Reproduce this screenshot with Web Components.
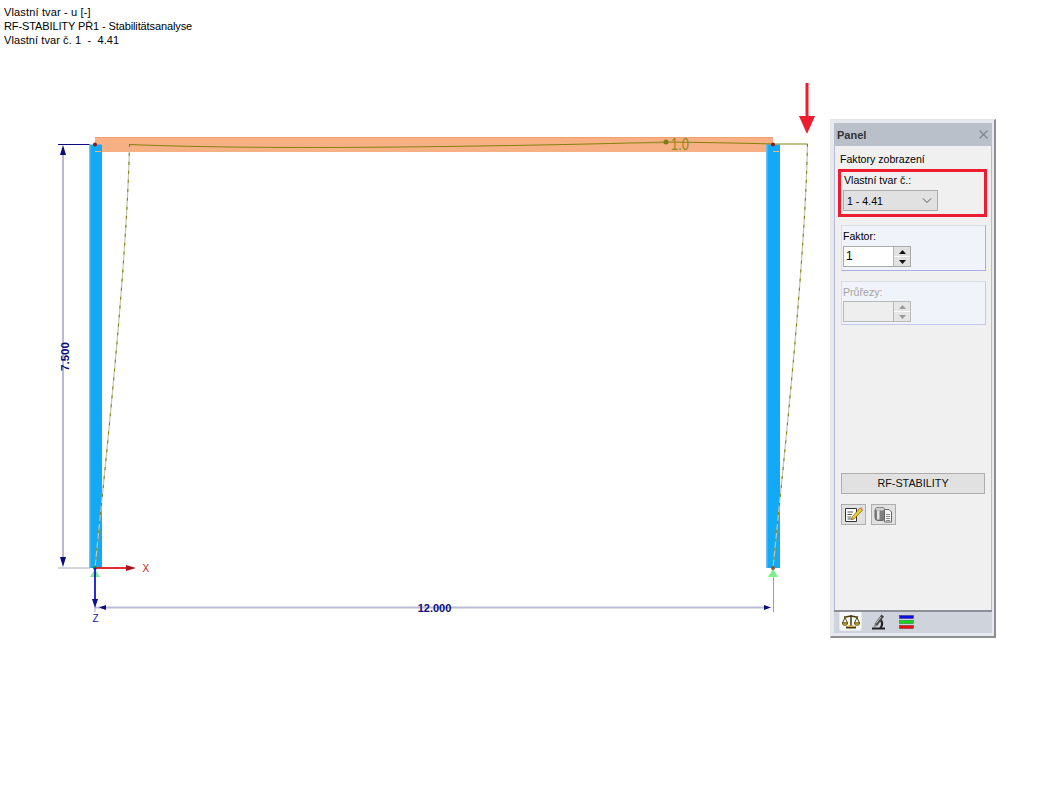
<!DOCTYPE html>
<html lang="cs">
<head>
<meta charset="utf-8">
<title>Panel</title>
<style>
    html, body { margin: 0; background: #fff; font-family: "Liberation Sans", Arial, sans-serif; }
</style>
</head>
<body>
<template id="template-group">
    <style>
        :host { display: block; box-sizing: border-box; margin: 0 5px 0 6px; padding: 2px 1px 0 1px; height: 46px;
            background: #f0f3f9; border: 1px solid #d9dde6; border-right-color: #a9aee6; border-bottom-color: #a9aee6; }
        :host([disabled]) { border-color: #d9dde6; border-right-color: #c4c8ee; border-bottom-color: #c4c8ee; color: #a3a3a3; height: 44px; }
        .label { display: block; height: 18px; line-height: 17px; font-size: 10.6px; }
        :host([disabled]) .label { height: 17px; }
    </style>
    <span class="label"><slot name="label"></slot></span>
    <slot></slot>
</template>
<template id="template-spinner">
    <style>
        :host { display: flex; box-sizing: border-box; width: 68px; height: 21px; border: 1px solid #a9a9a9; background: #fff; font-size: 12px; line-height: 19px; }
        :host([disabled]) { background: #eeeeee; border-color: #b9b9b9; }
        .value { flex: 1; padding-left: 2px; color: #000; }
        .arrows { width: 16px; display: grid; grid-template-rows: 1fr 1fr; gap: 1px; background: #fff; border-left: 1px solid #b5b5b5; }
        .arrows div { background: #e1e1e1; display: flex; align-items: center; justify-content: center; }
        :host([disabled]) .arrows div { background: #e6e6e6; }
        svg { display: block; fill: #111; }
        :host([disabled]) svg { fill: #9a9a9a; }
    </style>
    <div class="value"><slot></slot></div>
    <div class="arrows">
        <div><svg width="7" height="4" viewBox="0 0 7 4"><path d="M3.5 0L7 4H0Z"/></svg></div>
        <div><svg width="7" height="4" viewBox="0 0 7 4"><path d="M0 0H7L3.5 4Z"/></svg></div>
    </div>
</template>
<template id="template-select">
    <style>
        :host { display: flex; align-items: center; justify-content: space-between; box-sizing: border-box; width: 95px; height: 21px;
            padding: 0 3px 0 3px; background: #e1e1e1; border: 1px solid #adadad; font-size: 10.6px; color: #000; }
        svg { display: block; fill: none; stroke: #555; stroke-width: 1; margin-right: 2px; }
    </style>
    <slot></slot>
    <svg width="10" height="6" viewBox="0 0 10 6"><path d="M1 .5L5 4.5L9 .5"/></svg>
</template>
<template id="template-panel">
    <style>
        :host { display: flex; flex-direction: column; box-sizing: border-box; width: 166px; height: 519px; padding: 3px 2px 3px 3px;
            background: #e6eaf0; border: 1px solid #e4e6ea; border-right: 2px solid #8f8f8f; border-bottom: 2px solid #8f8f8f; color: #000; font-size: 10.6px; }
        .title { flex: none; display: flex; align-items: center; justify-content: space-between; height: 23px; padding: 0 4px 0 3px;
            background: #b9c0ca; font-weight: bold; color: #333; font-size: 11px; }
        .title svg { display: block; stroke: #7d838c; stroke-width: 1.2; fill: none; }
        .body { flex: 1; display: flex; flex-direction: column; background: #f0f0f0; border-left: 1px solid #b4bad8; border-right: 1px solid #b4bad8; }
        .tabs { flex: none; display: flex; height: 21px; padding-left: 5px; background: #cfd4dc; border-top: 2px solid #8c8f96; }
    </style>
    <div class="title"><span><slot name="title"></slot></span>
        <svg width="9" height="9" viewBox="0 0 9 9"><path d="M.5 .5L8.5 8.5M8.5 .5L.5 8.5"/></svg></div>
    <div class="body"><slot></slot></div>
    <div class="tabs"><slot name="tabs"></slot></div>
</template>
<template id="template-tool">
    <style>
        :host { display: flex; align-items: center; justify-content: center; box-sizing: border-box; width: 25px; height: 21px;
            background: #e1e1e1; border: 1px solid #adadad; }
    </style>
    <slot></slot>
</template>
<template id="template-tab">
    <style>
        :host { display: flex; align-items: center; justify-content: center; box-sizing: border-box; width: 23px; height: 19px; margin-right: 5px; }
        :host([active]) { background: #f5f7f9; border: 1px solid #e3eaf0; border-top: none; border-radius: 0 0 3px 3px; }
    </style>
    <slot></slot>
</template>
<template id="template-caption">
    <style>
        :host { display: block; padding: 5px 0 0 4px; font-size: 11px; line-height: 14px; color: #000; }
        ::slotted(div) { white-space: pre; }
    </style>
    <slot></slot>
</template>
<template id="template-diagram">
    <style>
        :host { display: block; position: absolute; left: 0; top: 0; width: 1050px; height: 788px; }
        svg { display: block; }
        text { font-family: "Liberation Sans", Arial, sans-serif; }
    </style>
    <svg width="1050" height="788" viewBox="0 0 1050 788">
        <!-- rozmerove cary -->
        <path d="M63 150V563" stroke="#b9b9d2" stroke-width="2" fill="none"/>
        <path d="M95 607.5H768" stroke="#bcbcd4" stroke-width="2" fill="none"/>
        <path d="M58 144.5H90" stroke="#0b0b7a" fill="none"/>
        <path d="M58 568H90" stroke="#a9a9c4" fill="none"/>
        <path d="M773.5 570V612" stroke="#9a9abb" fill="none"/>
        <path d="M95 597V612" stroke="#a9a9c4" fill="none"/>
        <path d="M63 145L66 155H60Z M63 567L66 557H60Z" fill="#0b0b7a"/>
        <path d="M99 607.5L106 605V610Z M771 607.5L764 605V610Z" fill="#0b0b7a"/>

        <!-- ramova konstrukce -->
        <rect x="95" y="137" width="678" height="15" fill="#f7b084"/>
        <path d="M95 137.5H773" stroke="#f1a06d" fill="none"/>
        <rect x="89" y="144.5" width="13" height="423.5" fill="#12a9f7"/>
        <rect x="89" y="144.5" width="1.5" height="423.5" fill="#6fbff0"/>
        <rect x="766" y="144.5" width="14" height="423.5" fill="#12a9f7"/>
        <rect x="766" y="144.5" width="1.5" height="423.5" fill="#6fbff0"/>
        <path d="M95 151.500H101 M773 151.500H779" stroke="#f0b48e" fill="none"/>

        <!-- vlastni tvar -->
        <path d="M129.500 144C127 260 108 440 95 568" stroke="#c4c6aa" stroke-width="1.200" fill="none"/>
        <path d="M807.500 144C805 260 786 440 773 568" stroke="#c4c6aa" stroke-width="1.200" fill="none"/>
        <path d="M129.500 144C127 260 108 440 95 568" stroke="#7f7f00" stroke-dasharray="3 6" fill="none"/>
        <path d="M807.500 144C805 260 786 440 773 568" stroke="#7f7f00" stroke-dasharray="3 6" fill="none"/>
        <path d="M129.500 144.500C200 147.500 300 148 400 147S600 144 666 142C700 142.500 740 143 773 144H807.500" stroke="#82820a" fill="none"/>
        <path d="M632 143H664" stroke="#b09a50" stroke-dasharray="2 1" fill="none"/>
        <circle cx="666" cy="142" r="2.500" fill="#85781a"/>
        <text x="671" y="149.500" font-size="16" fill="#8a8a20" textLength="18" lengthAdjust="spacingAndGlyphs">1.0</text>

        <!-- podpory a uzly -->
        <path d="M95 569L100 577H90Z M773 569L778 577H768Z" fill="#7bf08a"/>
        <circle cx="95" cy="144.500" r="2" fill="#8e1a1a"/>
        <circle cx="773" cy="144.500" r="2" fill="#8e1a1a"/>
        <circle cx="95" cy="568" r="2" fill="#1d8a3a"/>
        <circle cx="773" cy="568" r="2" fill="#8a5a2a"/>

        <!-- osy -->
        <path d="M95 568H127" stroke="#e4141c" stroke-width="1.800" fill="none"/>
        <path d="M126 565L136 568L126 571Z" fill="#a5141c"/>
        <path d="M95 568V600" stroke="#1616d8" stroke-width="1.800" fill="none"/>
        <path d="M92 599L95 608L98 599Z" fill="#10108a"/>

        <text x="142.500" y="572" font-size="10" fill="#c81414">X</text>
        <text x="92.500" y="622" font-size="10" fill="#1414b8">Z</text>

        <text x="434.500" y="611.500" font-size="11" font-weight="bold" fill="#0b0b7a" text-anchor="middle">12.000</text>
        <text transform="translate(68.500 356.500) rotate(-90)" font-size="11.500" font-weight="bold" fill="#0b0b7a" text-anchor="middle">7.500</text>

        <!-- sipka -->
        <path d="M807 83V117" stroke="#ee1c2e" stroke-width="3" fill="none"/>
        <path d="M799 116H815L807 134Z" fill="#ee1c2e"/>
    </svg>
</template>
<template id="template-screen">
    <style>
        :host { display: block; position: relative; width: 1050px; height: 788px; overflow: hidden; }
        .float { position: absolute; left: 830px; top: 119px; }
        .hint { position: absolute; left: 838px; top: 169px; box-sizing: border-box; width: 149px; height: 48px; border: 3px solid #ee1c2e; }
    </style>
    <x-diagram></x-diagram>
    <slot name="caption"></slot>
    <div class="float"><slot></slot></div>
    <div class="hint"></div>
</template>

<x-screen>
    <x-caption slot="caption">
        <div style="letter-spacing:.15px">Vlastní tvar - u [-]</div>
        <div style="letter-spacing:-.11px">RF-STABILITY PŘ1 - Stabilitätsanalyse</div>
        <div style="letter-spacing:.08px">Vlastní tvar č. 1  -  4.41</div>
    </x-caption>
    <x-panel>
        <span slot="title">Panel</span>
        <div style="display:flex;flex-direction:column;flex:1">
            <div style="height:6px"></div>
            <div style="height:14px;line-height:14px;margin-left:5px">Faktory zobrazení</div>
            <div style="height:6px"></div>
            <div style="height:16px;line-height:16px;margin-left:9px">Vlastní tvar č.:</div>
            <div style="height:2px"></div>
            <x-select style="margin-left:8px">1 - 4.41</x-select>
            <div style="height:14px"></div>
            <x-group>
                <span slot="label">Faktor:</span>
                <x-spinner>1</x-spinner>
            </x-group>
            <div style="height:10px"></div>
            <x-group disabled>
                <span slot="label">Průřezy:</span>
                <x-spinner disabled></x-spinner>
            </x-group>
            <div style="flex:1"></div>
            <div style="margin:0 6px 10px 6px;height:21px;box-sizing:border-box;background:#e1e1e1;border:1px solid #adadad;text-align:center;line-height:19px;color:#111;font-size:10.8px">RF-STABILITY</div>
            <div style="display:flex;gap:5px;margin:0 0 85px 6px">
                <x-tool>
                    <svg width="19" height="17" viewBox="0 0 19 17">
                        <path d="M1.500 2.500H12.500V15.500H1.500Z" fill="#fff" stroke="#333"/>
                        <path d="M3.500 6H9M3.500 8.500H8M3.500 11H7M3.500 13H9" stroke="#555" fill="none"/>
                        <path d="M8 11L16 2L18.500 4L10 13L7.500 13.500Z" fill="#f2cf2a" stroke="#6d5a0a" stroke-width=".7"/>
                        <path d="M16 2L17 1L19 3L18.500 4Z" fill="#e88aa0"/>
                    </svg>
                </x-tool>
                <x-tool>
                    <svg width="19" height="17" viewBox="0 0 19 17">
                        <rect x="1" y="1.500" width="10" height="13" rx="3" fill="#7f7f7f" stroke="#666"/>
                        <ellipse cx="6" cy="3" rx="4.500" ry="1.500" fill="#cfcfcf"/>
                        <rect x="3" y="4.500" width="2.500" height="9" fill="#e5e5e5"/>
                        <path d="M10.500 3.500H15L17.500 6V16H10.500Z" fill="#f5f5f5" stroke="#666"/>
                        <path d="M12 8.500H16M12 10.500H16M12 12.500H16M12 14.500H16" stroke="#888" fill="none"/>
                    </svg>
                </x-tool>
            </div>
        </div>
        <x-tab slot="tabs" active>
            <svg width="18" height="15" viewBox="0 0 18 15">
                <path d="M9 1V12.500M2 3C5 3 7 2 9 2S13 3 16 3" stroke="#4a3c08" stroke-width="1.500" fill="none"/>
                <path d="M3 3.500L.5 9H5.500ZM15 3.500L12.500 9H17.500Z" fill="none" stroke="#5c4a0c" stroke-width="1"/>
                <path d="M.3 9A2.700 2.400 0 0 0 5.700 9ZM12.300 9A2.700 2.400 0 0 0 17.700 9Z" fill="#d8b53a" stroke="#4a3c08" stroke-width=".7"/>
                <path d="M4 12.500H14V14.500H4Z" fill="#4a3c08"/>
                <path d="M6 11.500H12V13H6Z" fill="#d0ab30"/>
            </svg>
        </x-tab>
        <x-tab slot="tabs">
            <svg width="15" height="16" viewBox="0 0 15 16">
                <path d="M1 15.500H14V13.500H11C13 10.500 12.500 7 10 5L8.500 6.500C10.500 8.500 10.500 11 8.500 13.500H1Z" fill="#222"/>
                <path d="M3.500 10L10.500 .5L13 2.500L6 12Z" fill="#444"/>
                <path d="M5 9.500L10 3" stroke="#d5d5d5" fill="none"/>
                <path d="M2.500 12.500L4 10L6 11.500L4 13.500Z" fill="#8f8f8f"/>
            </svg>
        </x-tab>
        <x-tab slot="tabs">
            <svg width="15" height="14" viewBox="0 0 15 14">
                <rect x=".5" y=".5" width="14" height="3" fill="#0d0de8" stroke="#33336a" stroke-width=".5"/>
                <rect x=".5" y="5.500" width="14" height="3" fill="#10d81c" stroke="#2d6a33" stroke-width=".5"/>
                <rect x=".5" y="10.500" width="14" height="3" fill="#e81010" stroke="#6a2d2d" stroke-width=".5"/>
            </svg>
        </x-tab>
    </x-panel>
</x-screen>

<script>
    // kazdy prvek si naklonuje svou sablonu do otevreneho shadow rootu
    const simple = { 'x-group': 'group', 'x-spinner': 'spinner', 'x-select': 'select', 'x-panel': 'panel',
        'x-tool': 'tool', 'x-tab': 'tab', 'x-caption': 'caption', 'x-diagram': 'diagram', 'x-screen': 'screen' };
    Object.entries(simple).forEach(([tag, name]) => {
        customElements.define(tag, class extends HTMLElement {
            constructor() {
                super();
                this.attachShadow({ mode: 'open' });
                this.shadowRoot.appendChild(document.getElementById('template-' + name).content.cloneNode(true));
            }
        });
    });
</script>
</body>
</html>
